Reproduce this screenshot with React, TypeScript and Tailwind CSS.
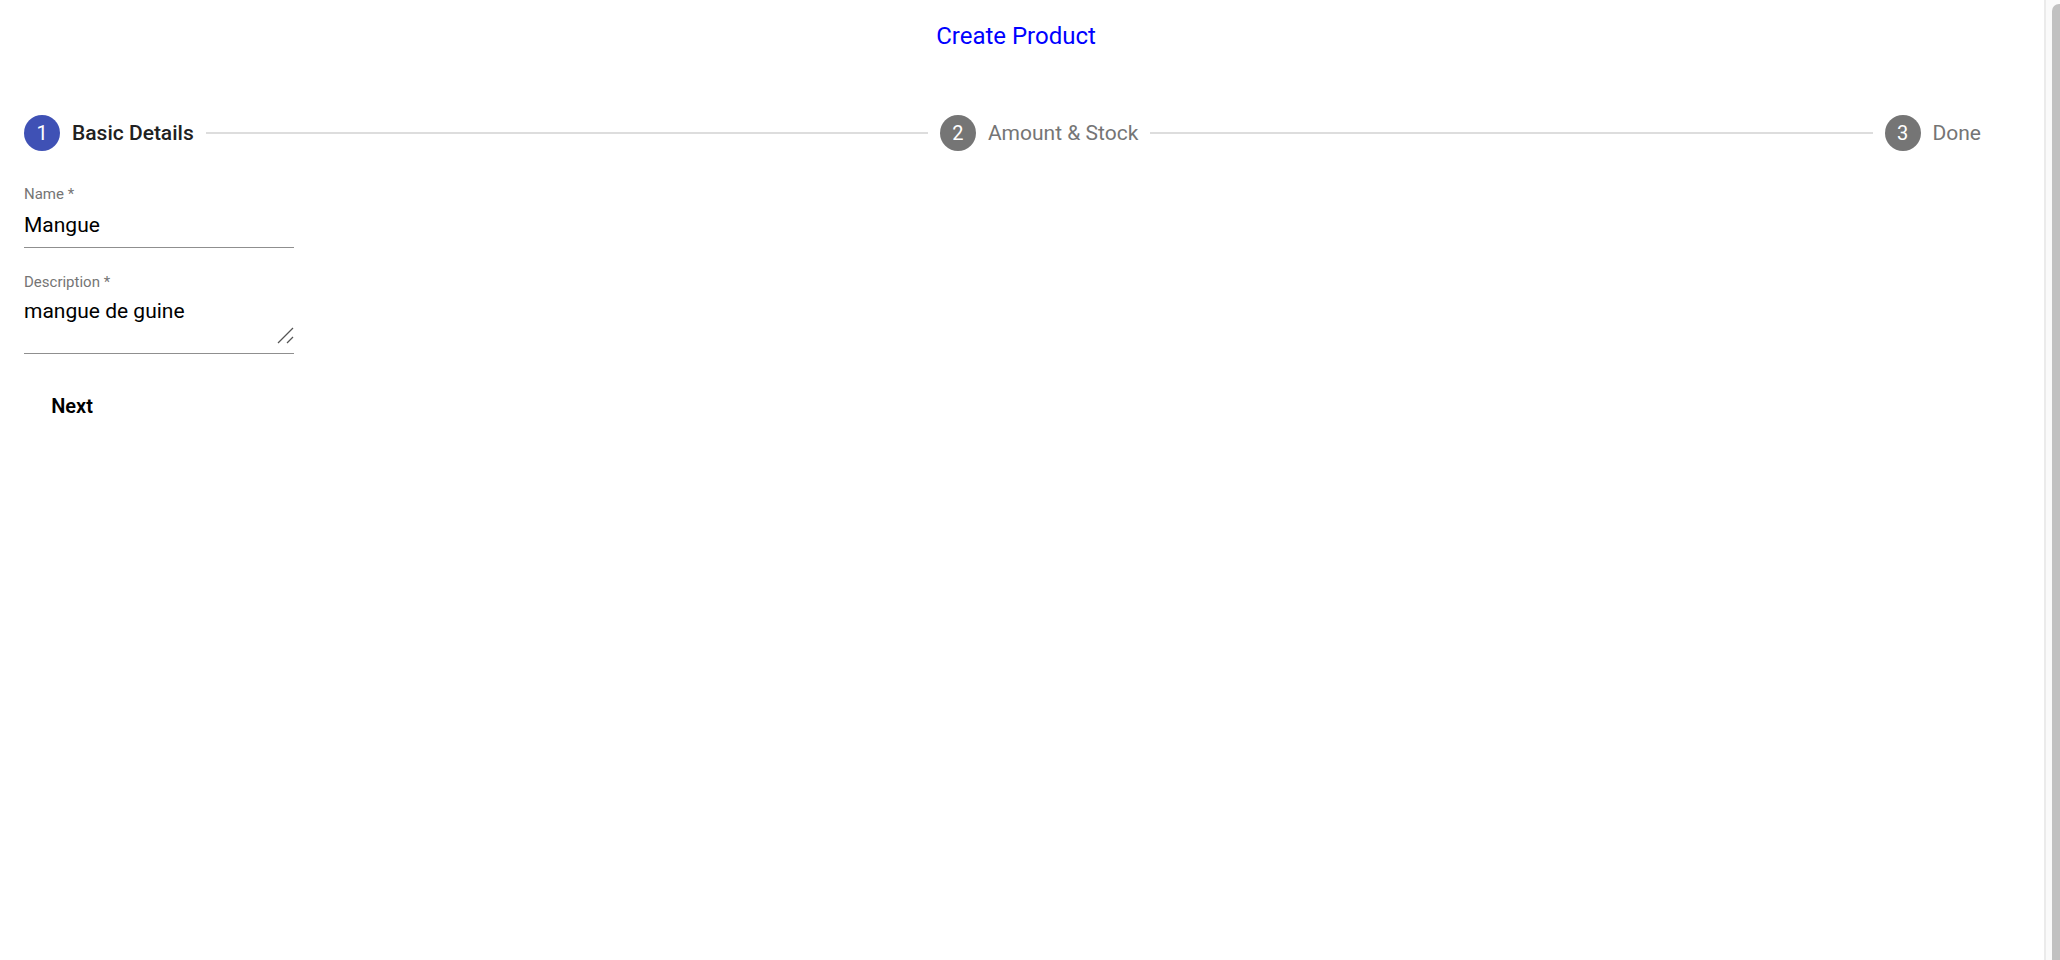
import React from "react";

const font = { fontFamily: "Roboto, 'Liberation Sans', sans-serif" };

function StepIcon({ n, active }: { n: number; active?: boolean }) {
  return (
    <div
      className={
        "flex h-[36px] w-[36px] shrink-0 items-center justify-center rounded-full text-[20px] leading-none text-white " +
        (active ? "bg-[#3f51b5]" : "bg-[#757575]")
      }
    >
      {n}
    </div>
  );
}

function Step({ n, label, active }: { n: number; label: string; active?: boolean }) {
  return (
    <div className="flex items-center gap-[12px] px-[12px]">
      <StepIcon n={n} active={active} />
      <span
        className={
          "text-[21px] leading-[25px] whitespace-nowrap " +
          (active ? "font-medium text-[#212121]" : "font-normal text-[#757575]")
        }
      >
        {label}
      </span>
    </div>
  );
}

function Connector() {
  return <div className="h-[2px] flex-1 bg-[#dddddd]" />;
}

export default function App() {
  return (
    <div className="flex h-[960px] w-full bg-white" style={font}>
      <main className="flex min-w-0 flex-1 flex-col">
        <div className="pt-[22px] pr-[12px] text-center text-[24px] leading-[28px] text-[#0000ff]">
          Create Product
        </div>

        <div className="mt-[65px] flex items-center pl-[12px] pr-[51px]">
          <Step n={1} label="Basic Details" active />
          <Connector />
          <Step n={2} label="Amount & Stock" />
          <Connector />
          <Step n={3} label="Done" />
        </div>

        <form className="flex flex-col items-start pl-[24px]">
          <div className="mt-[34px] flex w-[270px] flex-col border-b-[1.5px] border-[#8f8f8f]">
            <label className="text-[15px] leading-[18px] text-[#757575]">Name *</label>
            <div className="mt-[10px] pb-[9px] text-[21px] leading-[25px] text-black">Mangue</div>
          </div>

          <div className="mt-[25px] flex w-[270px] flex-col border-b-[1.5px] border-[#8f8f8f]">
            <label className="text-[15px] leading-[18px] text-[#757575]">Description *</label>
            <div className="relative mt-[8px] mb-[7px]">
              <textarea
                readOnly
                value="mangue de guine"
                className="block h-[47px] w-full resize-none border-0 bg-transparent p-0 text-[21px] leading-[25px] text-black outline-none"
                style={font}
              />
              <svg
                className="absolute right-0 bottom-[2px]"
                width="18"
                height="18"
                viewBox="0 0 18 18"
              >
                <line x1="2" y1="17" x2="17" y2="2" stroke="#555" strokeWidth="1.3" />
                <line x1="11" y1="17" x2="17" y2="11" stroke="#555" strokeWidth="1.3" />
              </svg>
            </div>
          </div>

          <button
            type="button"
            className="mt-[26px] flex h-[53px] min-w-[96px] items-center justify-center px-[12px] text-[20px] leading-[35px] font-semibold text-black"
          >
            Next
          </button>
        </form>
      </main>

      <div className="flex w-[16px] shrink-0 border-l-2 border-[#ebebeb] bg-[#fafafa]">
        <div className="ml-auto mt-[4px] w-[8px] rounded-tl-[7px] bg-[#c1c1c1]" />
      </div>
    </div>
  );
}
